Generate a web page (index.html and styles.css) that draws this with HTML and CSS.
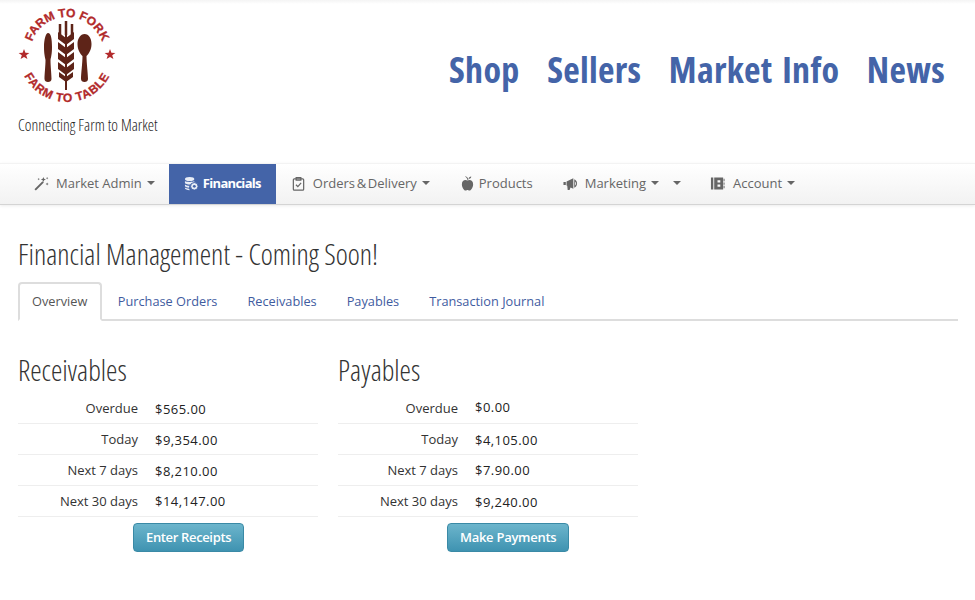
FILE: index.html
```html
<!DOCTYPE html>
<html lang="en">
<head>
<meta charset="utf-8">
<title>Financial Management</title>
<link rel="stylesheet" href="styles.css">
</head>
<body>
<header class="site-header">
  <div class="brand">
    <svg class="logo" width="114" height="105" viewBox="0 0 114 105" aria-label="Farm to Fork, Farm to Table">
      <defs>
        <path id="arcTop" d="M 20 49 A 37 37 0 0 1 94 49"/>
        <path id="arcBottom" d="M 9 49 A 48 48 0 0 0 105 49"/>
      </defs>
      <text class="logo-text"><textPath href="#arcTop" startOffset="50%" text-anchor="middle">FARM TO FORK</textPath></text>
      <text class="logo-text logo-text-wide"><textPath href="#arcBottom" startOffset="50%" text-anchor="middle">FARM TO TABLE</textPath></text>
      <polygon class="logo-star" points="14,44 15.4,47.8 19.4,47.9 16.2,50.3 17.4,54.1 14,51.9 10.600,54.1 11.8,50.3 8.600,47.9 12.600,47.8"/>
      <polygon class="logo-star" points="100,44 101.4,47.8 105.4,47.9 102.2,50.3 103.4,54.1 100,51.9 96.600,54.1 97.8,50.3 94.600,47.9 98.600,47.8"/>
      <path class="logo-art" d="M38 28c3 0 4 6 4 14 0 7-1 10-1.500 13 0 6 1 14 1 19 0 2-1.500 3-3.500 3s-3.500-1-3.500-3c0-5 1-13 1-19-.5-3-1.500-6-1.500-13 0-8 2-14 4-14z"/>
      <path class="logo-art" d="M74.500 29c4.500 0 7 4.500 7 10 0 6-3 10-5 12 0 7 1.500 18 1.500 23 0 2-1.500 3-3.500 3s-3.500-1-3.500-3c0-5 1.500-16 1.500-23-2-2-5-6-5-12 0-5.500 3-10 7-10z"/>
      <path class="logo-stem" d="M56 17v68"/>
      <path class="logo-tine" d="M50 19v14M56 16v14M62 19v14"/>
      <path class="logo-wheat" d="M48 27l8 6 8-6v7l-8 6-8-6zM48 37l8 6 8-6v7l-8 6-8-6zM48 47l8 6 8-6v7l-8 6-8-6zM48 57l8 6 8-6v7l-8 6-8-6zM49 67l7 5 7-5v5l-7 5-7-5z"/>
    </svg>
    <p class="tagline">Connecting Farm to Market</p>
  </div>
  <nav class="site-links">
    <a href="#">Shop</a>
    <a href="#">Sellers</a>
    <a href="#">Market Info</a>
    <a href="#">News</a>
  </nav>
</header>

<nav class="menu">
  <a class="menu-item menu-first" href="#">
    <svg class="ico" viewBox="0 0 16 16"><path d="M.5 14l8.500-8.500 1.500 1.500L2 15.500zM10 1l.8 1.900 1.900.8-1.900.8L10 6.400l-.8-1.900-1.900-.8 1.900-.8zM14 7l.5 1.100 1.100.5-1.100.5-.5 1.100-.5-1.100-1.100-.5 1.100-.5zM14 1l.4.9.9.4-.9.4-.4.9-.4-.9-.9-.4.9-.4zM5 2l.4.9.9.4-.9.4-.4.9-.4-.9-.9-.4.9-.4z"/></svg>
    <span>Market Admin</span><i class="caret"></i></a>
  <a class="menu-item active tight" href="#">
    <svg class="ico" viewBox="0 0 16 16"><ellipse cx="6" cy="3.200" rx="5" ry="2.200"/><path d="M1 5.300c1.500 1.300 8.500 1.300 10 0v1.500c-2 .2-3.500 1-4.500 2.300C4 9.200 1.800 8.600 1 7.500zM1 9c1 .8 2.800 1.300 4.800 1.400-.3.600-.4 1.300-.4 2C3.400 12.300 1.700 11.700 1 10.800zM1 12.300c1 .7 2.600 1.200 4.500 1.300l.6 1.500c-2.600 0-5.100-.8-5.100-2z"/><circle class="ico-ring" cx="11" cy="11" r="4"/><circle class="ico-core" cx="11" cy="11" r="1.500"/></svg>
    <b class="menu-strong">Financials</b></a>
  <a class="menu-item" href="#">
    <svg class="ico ico-line" viewBox="0 0 16 16"><rect x="2.500" y="3" width="11" height="12" rx="1"/><path d="M5.500 1.800h5v2.500h-5zM5.300 9.300l2 2 3.500-4"/></svg>
    <span class="narrow-words">Orders &amp; Delivery</span><i class="caret"></i></a>
  <a class="menu-item tight" href="#">
    <svg class="ico" viewBox="0 0 16 16"><path d="M8 4.800C6 3.500 2 4 2 8.700 2 12.500 4.500 15.500 6 15.500c1 0 1.200-.5 2-.5s1 .5 2 .5c1.500 0 4-3 4-6.800C14 4 10 3.500 8 4.800z"/><path d="M8 4.500C7.800 2.800 7 1.500 5.500.8L6 .2C8 1 8.800 2.500 9 4.500zM9 3c.3-1.500 1.500-2.500 3-2.500 0 1.500-1.200 2.500-3 2.500z"/></svg>
    <span>Products</span></a>
  <a class="menu-item" href="#">
    <svg class="ico" viewBox="0 0 16 16"><path d="M.5 6.500h2.500v3H.5zM3.800 5.800L11 2.500v11L8 12.200 7 15H5l-.5-4.600-.7-.2zM12 3.500c2 .8 3 2.500 3 4.500s-1 3.700-3 4.500zM13 6v4c.7-.5 1-1.200 1-2s-.3-1.500-1-2z" fill-rule="evenodd"/></svg>
    <span>Marketing</span><i class="caret"></i></a>
  <a class="menu-item menu-extra" href="#"><i class="caret"></i></a>
  <a class="menu-item wide" href="#">
    <svg class="ico" viewBox="0 0 16 16"><path d="M1 1.500h2.500v13H1zM4.500 1.500H14v13H4.500zM8 4.500v2.500h3V4.500zM8 9v2.500h3V9z" fill-rule="evenodd"/><path d="M14.500 3h1v2.500h-1zM14.500 6.800h1v2.500h-1zM14.500 10.500h1V13h-1z"/></svg>
    <span>Account</span><i class="caret"></i></a>
</nav>

<main class="content">
  <h1 class="page-title">Financial Management - Coming Soon!</h1>
  <ul class="tabs">
    <li><a class="tab current" href="#">Overview</a></li>
    <li><a class="tab" href="#">Purchase Orders</a></li>
    <li><a class="tab" href="#">Receivables</a></li>
    <li><a class="tab" href="#">Payables</a></li>
    <li><a class="tab" href="#">Transaction Journal</a></li>
  </ul>
  <div class="panels">
    <section class="panel">
      <h2 class="panel-title">Receivables</h2>
      <table class="summary">
        <tr><th>Overdue</th><td>$565.00</td></tr>
        <tr><th>Today</th><td>$9,354.00</td></tr>
        <tr><th>Next 7 days</th><td>$8,210.00</td></tr>
        <tr><th>Next 30 days</th><td class="raised">$14,147.00</td></tr>
      </table>
      <div class="action action-receipts"><a class="btn" href="#">Enter Receipts</a></div>
    </section>
    <section class="panel">
      <h2 class="panel-title">Payables</h2>
      <table class="summary">
        <tr><th>Overdue</th><td class="raised">$0.00</td></tr>
        <tr><th>Today</th><td>$4,105.00</td></tr>
        <tr><th>Next 7 days</th><td class="raised">$7.90.00</td></tr>
        <tr><th>Next 30 days</th><td>$9,240.00</td></tr>
      </table>
      <div class="action action-payments"><a class="btn" href="#">Make Payments</a></div>
    </section>
  </div>
</main>
</body>
</html>
```

FILE: styles.css
```css
* { box-sizing: border-box; }
html, body { margin: 0; padding: 0; }
body {
  background: #fff;
  color: #333;
  font-family: "Open Sans", "Liberation Sans", sans-serif;
  font-size: 13px;
  line-height: 18px;
}
a { text-decoration: none; }

.site-header {
  height: 163px;
  display: flex;
  justify-content: space-between;
  padding: 5px 30px 0 18px;
  background: linear-gradient(#f4f4f4, #fff 4px);
}
.brand { width: 160px; }
.logo { display: block; margin-left: -8px; }
.logo-text { font: bold 12px "Liberation Sans", sans-serif; fill: #b22a2b; stroke: #b22a2b; stroke-width: .3px; }
.logo-text-wide { letter-spacing: .7px; }
.logo-star { fill: #b22a2b; }
.logo-art { fill: #5e2418; }
.logo-stem, .logo-tine { fill: none; stroke: #5e2418; }
.logo-stem { stroke-width: 2; }
.logo-tine { stroke-width: 2.500; }
.logo-wheat { fill: #5e2418; }
.tagline {
  margin: 4px 0 0;
  font-size: 15.900px;
  font-weight: 300;
  font-stretch: 75%;
  line-height: 22px;
  color: #222;
  white-space: nowrap;
}
.site-links { display: flex; gap: 27.500px; padding-top: 40px; }
.site-links a {
  font-size: 36px;
  font-weight: 700;
  font-stretch: 75%;
  letter-spacing: .3px;
  word-spacing: 3px;
  line-height: 50px;
  color: #4464a8;
  white-space: nowrap;
}

.menu {
  height: 42px;
  display: flex;
  padding-left: 19px;
  background: linear-gradient(#fff, #f2f2f2);
  border-top: 1px solid #f3f3f3;
  border-bottom: 1px solid #d4d4d4;
  box-shadow: 0 1px 3px rgba(0,0,0,.08);
}
.menu-item {
  display: flex;
  align-items: center;
  height: 40px;
  padding: 0 15px 2px;
  color: #666;
  white-space: nowrap;
}
.menu-first { padding-right: 14px; }
.menu-item .ico { margin-right: 7px; }
.menu-item.tight .ico { margin-right: 4px; }
.menu-item.wide .ico { margin-right: 8px; }
.menu-item.active { background: #4464a8; color: #fff; }
.menu-strong { font-weight: 700; letter-spacing: -.7px; }
.narrow-words { word-spacing: -1.700px; }
.menu-extra { padding: 0 14px 2px 0; margin-left: -1px; }
.menu-extra .caret { margin-left: 0; }
.ico { width: 15px; height: 15px; fill: #666; flex: none; }
.active .ico { fill: #e8edf6; }
.ico-ring { fill: #e8edf6; stroke: #4464a8; stroke-width: 1; }
.active .ico-core { fill: #4464a8; }
.ico-line { fill: none; stroke: #666; stroke-width: 1.300; }
.caret {
  display: inline-block;
  width: 0; height: 0;
  margin-left: 5px;
  border-top: 4px solid #666;
  border-left: 4px solid transparent;
  border-right: 4px solid transparent;
}

.content { padding: 0 17px 0 18px; }
.page-title {
  margin: 29px 0 0;
  font-size: 28.800px;
  font-weight: 300;
  font-stretch: 75%;
  line-height: 40px;
  color: #333;
}
.tabs {
  display: flex;
  list-style: none;
  margin: 8px 0 0;
  padding: 0;
  height: 39px;
  border-bottom: 2px solid #ddd;
}
.tab {
  display: block;
  height: 39px;
  padding: 8px 12px;
  margin-right: 2px;
  color: #3f5c9f;
  font-size: 12.750px;
  border: 2px solid transparent;
  border-radius: 4px 4px 0 0;
}
.tab.current {
  padding-right: 12.500px;
  color: #555;
  background: #fff;
  border-color: #ddd #ddd #fff;
}

.panels { display: flex; gap: 20px; margin-top: 27px; }
.panel { width: 300px; }
.panel-title {
  margin: 0;
  font-size: 28.800px;
  font-weight: 300;
  font-stretch: 75%;
  line-height: 44px;
  color: #333;
}
.summary { width: 300px; border-collapse: collapse; }
.summary tr { height: 31px; border-bottom: 1px solid #eee; }
.summary th {
  width: 120px;
  padding: 0;
  text-align: right;
  font-weight: 400;
  color: #333;
}
.summary tr:first-child th { padding-top: 2px; }
.summary td {
  padding: 2px 0 0 17px;
  letter-spacing: .45px;
  color: #222;
}
.summary tr:first-child td { padding-top: 4px; }
.summary td.raised,
.summary tr:first-child td.raised { padding-top: 0; }

.action { display: flex; margin-top: 6px; }
.action-receipts { padding-left: 115px; }
.action-payments { padding-left: 109px; }
.action-payments .btn { letter-spacing: -.28px; }
.btn {
  display: block;
  height: 29px;
  padding: 4px 12px;
  border: 1px solid #3a8aa6;
  border-radius: 4px;
  background: linear-gradient(#6cb5cc, #3f93b1);
  color: #fff;
  font-weight: 600;
  letter-spacing: -.35px;
}
```
